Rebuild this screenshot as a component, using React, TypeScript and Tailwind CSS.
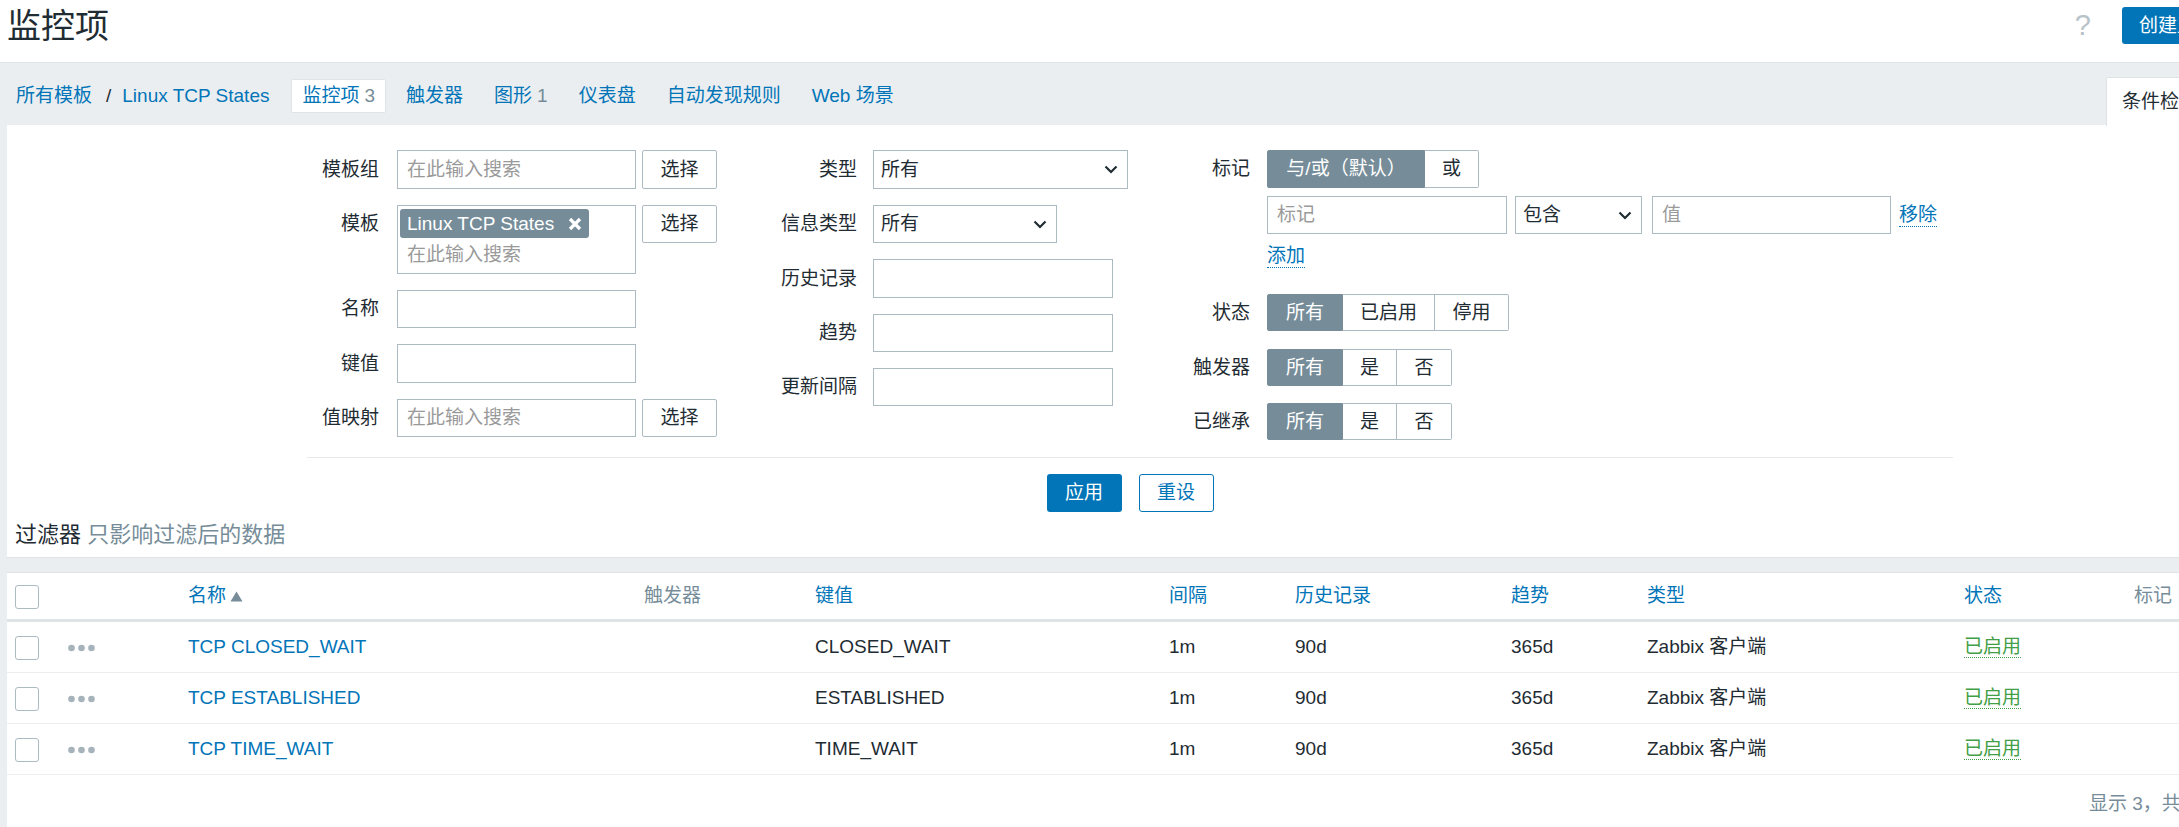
import React from "react";

function Chevron() {
  return (
    <svg width="14" height="9" viewBox="0 0 14 9" className="shrink-0">
      <polyline points="1.5,1.5 7,7 12.5,1.5" fill="none" stroke="#1f2c33" strokeWidth="2.2" />
    </svg>
  );
}

function Select({ w, text, h }: { w: string; text: string; h: string }) {
  return (
    <div className={`${w} ${h} flex items-center justify-between border border-[#acbbc2] bg-white pl-[7px] pr-[9px]`}>
      <span>{text}</span>
      <Chevron />
    </div>
  );
}

function Input({ w, h, ph }: { w: string; h: string; ph?: string }) {
  return (
    <div className={`${w} ${h} flex items-center border border-[#acbbc2] bg-white pl-[9px] text-[#9a9a9a]`}>
      {ph}
    </div>
  );
}

function PickBtn({ h }: { h: string }) {
  return (
    <div className={`${h} flex w-[75px] items-center justify-center rounded-[2px] border border-[#acbbc2] bg-white`}>
      选择
    </div>
  );
}

type SegItem = { t: string; w: string; on?: boolean };

function Seg({ items }: { items: SegItem[] }) {
  return (
    <div className="flex h-full">
      {items.map((it, i) => (
        <div
          key={i}
          className={`${it.w} flex items-center justify-center ${
            it.on
              ? "border border-[#768d99] bg-[#768d99] text-white"
              : "border-y border-r border-[#acbbc2] bg-white"
          } ${i === 0 ? "rounded-l-[2px]" : ""} ${i === items.length - 1 ? "rounded-r-[2px]" : ""}`}
        >
          {it.t}
        </div>
      ))}
    </div>
  );
}

function Label1({ t, h }: { t: string; h: string }) {
  return <div className={`${h} flex w-[72px] shrink-0 items-center justify-end`}>{t}</div>;
}
function Label2({ t, h }: { t: string; h: string }) {
  return <div className={`${h} flex w-[100px] shrink-0 items-center justify-end`}>{t}</div>;
}

function Dots() {
  return (
    <svg width="27" height="8" viewBox="0 0 27 8">
      <circle cx="3.5" cy="4" r="3.3" fill="#a6b3ba" />
      <circle cx="13.5" cy="4" r="3.3" fill="#a6b3ba" />
      <circle cx="23.5" cy="4" r="3.3" fill="#a6b3ba" />
    </svg>
  );
}

function Check() {
  return <div className="h-[24px] w-[24px] rounded-[3px] border border-[#acbbc2] bg-white" />;
}

const cols =
  "grid grid-cols-[53px_120px_456px_171px_354px_126px_216px_136px_317px_170px_1fr]";

const rows = [
  { name: "TCP CLOSED_WAIT", key: "CLOSED_WAIT" },
  { name: "TCP ESTABLISHED", key: "ESTABLISHED" },
  { name: "TCP TIME_WAIT", key: "TIME_WAIT" },
];

export default function App() {
  return (
    <div className="h-[827px] w-[2179px] overflow-hidden bg-[#ebeef0] font-['Liberation_Sans','Noto_Sans_CJK_SC',sans-serif] text-[19px] leading-[24px] text-[#1f2c33]">
      {/* Header */}
      <div className="flex h-[62px] items-start justify-between bg-white pl-[7px] pt-[7px]">
        <h1 className="text-[34px] font-normal leading-[38px]">监控项</h1>
        <div className="flex h-[37px] items-center">
          <span className="text-[29px] leading-[37px] text-[#b8c3c9]">?</span>
          <div className="ml-[31px] w-[57px] overflow-hidden">
            <div className="flex h-[37px] w-[129px] items-center rounded-[3px] bg-[#0275b8] pl-[17px] whitespace-nowrap text-white">
              创建监控项
            </div>
          </div>
        </div>
      </div>

      {/* Tabs band */}
      <div className="flex h-[63px] border-t border-[#dfe4e7] bg-[#ebeef0]">
        <div className="flex flex-1 items-start pl-[16px] pt-[16px]">
          <div className="flex h-[34px] items-center text-[#0275b8]">
            <span>所有模板</span>
            <span className="ml-[14px] mr-[11px] text-[#1f2c33]">/</span>
            <span>Linux TCP States</span>
          </div>
          <div className="ml-[22px] flex h-[34px] items-center gap-[9px]">
            <div className="flex h-[34px] items-center rounded-[2px] border border-[#dfe4e7] bg-white px-[10px] text-[#0275b8]">
              监控项<span className="ml-[5px] text-[#768d99]">3</span>
            </div>
            <div className="px-[11px] text-[#0275b8]">触发器</div>
            <div className="px-[11px] text-[#0275b8]">
              图形<span className="ml-[5px] text-[#768d99]">1</span>
            </div>
            <div className="px-[11px] text-[#0275b8]">仪表盘</div>
            <div className="px-[11px] text-[#0275b8]">自动发现规则</div>
            <div className="px-[11px] text-[#0275b8]">Web 场景</div>
          </div>
        </div>
        <div className="mt-[14px] flex h-[49px] w-[73px] shrink-0 items-center overflow-hidden rounded-tl-[2px] border-l border-t border-[#dfe4e7] bg-white pl-[15px] whitespace-nowrap">
          条件检索
        </div>
      </div>

      {/* Filter panel */}
      <div className="ml-[7px] border-b border-[#dfe4e7] bg-white pb-[10px] pt-[25px]">
        <div className="ml-[300px] w-[1646px]">
          <div className="flex items-start">
            {/* Column 1 */}
            <div className="flex w-[410px] flex-col gap-[16px]">
              <div className="flex items-start">
                <Label1 t="模板组" h="h-[39px]" />
                <div className="ml-[18px]">
                  <Input w="w-[239px]" h="h-[39px]" ph="在此输入搜索" />
                </div>
                <div className="ml-[6px]">
                  <PickBtn h="h-[39px]" />
                </div>
              </div>
              <div className="flex items-start">
                <Label1 t="模板" h="h-[38px]" />
                <div className="ml-[18px] flex h-[69px] w-[239px] flex-col border border-[#acbbc2] bg-white px-[2px] pt-[3px]">
                  <div className="flex h-[29px] w-[189px] items-center justify-between rounded-[3px] bg-[#768d99] pl-[7px] pr-[7px] text-white">
                    <span>Linux TCP States</span>
                    <svg width="14" height="14" viewBox="0 0 14 14">
                      <path d="M2 2 L12 12 M12 2 L2 12" stroke="white" strokeWidth="3.2" />
                    </svg>
                  </div>
                  <div className="mt-[5px] pl-[7px] text-[#9a9a9a]">在此输入搜索</div>
                </div>
                <div className="ml-[6px]">
                  <PickBtn h="h-[38px]" />
                </div>
              </div>
              <div className="flex items-start">
                <Label1 t="名称" h="h-[38px]" />
                <div className="ml-[18px]">
                  <Input w="w-[239px]" h="h-[38px]" />
                </div>
              </div>
              <div className="flex items-start">
                <Label1 t="键值" h="h-[39px]" />
                <div className="ml-[18px]">
                  <Input w="w-[239px]" h="h-[39px]" />
                </div>
              </div>
              <div className="flex items-start">
                <Label1 t="值映射" h="h-[38px]" />
                <div className="ml-[18px]">
                  <Input w="w-[239px]" h="h-[38px]" ph="在此输入搜索" />
                </div>
                <div className="ml-[6px]">
                  <PickBtn h="h-[38px]" />
                </div>
              </div>
            </div>

            {/* Column 2 */}
            <div className="ml-[40px] flex w-[371px] flex-col gap-[16px]">
              <div className="flex items-start">
                <Label2 t="类型" h="h-[39px]" />
                <div className="ml-[16px]">
                  <Select w="w-[255px]" h="h-[39px]" text="所有" />
                </div>
              </div>
              <div className="flex items-start">
                <Label2 t="信息类型" h="h-[38px]" />
                <div className="ml-[16px]">
                  <Select w="w-[184px]" h="h-[38px]" text="所有" />
                </div>
              </div>
              <div className="flex items-start">
                <Label2 t="历史记录" h="h-[39px]" />
                <div className="ml-[16px]">
                  <Input w="w-[240px]" h="h-[39px]" />
                </div>
              </div>
              <div className="flex items-start">
                <Label2 t="趋势" h="h-[38px]" />
                <div className="ml-[16px]">
                  <Input w="w-[240px]" h="h-[38px]" />
                </div>
              </div>
              <div className="flex items-start">
                <Label2 t="更新间隔" h="h-[38px]" />
                <div className="ml-[16px]">
                  <Input w="w-[240px]" h="h-[38px]" />
                </div>
              </div>
            </div>

            {/* Column 3 */}
            <div className="ml-[22px] flex flex-col">
              <div className="flex h-[38px] items-start">
                <Label2 t="标记" h="h-[38px]" />
                <div className="ml-[17px] h-[38px]">
                  <Seg
                    items={[
                      { t: "与/或（默认）", w: "w-[158px]", on: true },
                      { t: "或", w: "w-[54px]" },
                    ]}
                  />
                </div>
              </div>
              <div className="ml-[117px] mt-[8px] flex h-[38px] items-center">
                <Input w="w-[240px]" h="h-[38px]" ph="标记" />
                <div className="ml-[8px]">
                  <Select w="w-[127px]" h="h-[38px]" text="包含" />
                </div>
                <div className="ml-[10px]">
                  <Input w="w-[239px]" h="h-[38px]" ph="值" />
                </div>
                <span className="ml-[8px] border-b border-dotted border-[#0275b8] leading-[22px] text-[#0275b8]">
                  移除
                </span>
              </div>
              <div className="ml-[117px] mt-[10px] flex h-[24px] items-center">
                <span className="border-b border-dotted border-[#0275b8] leading-[22px] text-[#0275b8]">
                  添加
                </span>
              </div>
              <div className="mt-[26px] flex h-[37px] items-start">
                <Label2 t="状态" h="h-[37px]" />
                <div className="ml-[17px] h-[37px]">
                  <Seg
                    items={[
                      { t: "所有", w: "w-[76px]", on: true },
                      { t: "已启用", w: "w-[92px]" },
                      { t: "停用", w: "w-[74px]" },
                    ]}
                  />
                </div>
              </div>
              <div className="mt-[18px] flex h-[37px] items-start">
                <Label2 t="触发器" h="h-[37px]" />
                <div className="ml-[17px] h-[37px]">
                  <Seg
                    items={[
                      { t: "所有", w: "w-[76px]", on: true },
                      { t: "是", w: "w-[54px]" },
                      { t: "否", w: "w-[55px]" },
                    ]}
                  />
                </div>
              </div>
              <div className="mt-[17px] flex h-[37px] items-start">
                <Label2 t="已继承" h="h-[37px]" />
                <div className="ml-[17px] h-[37px]">
                  <Seg
                    items={[
                      { t: "所有", w: "w-[76px]", on: true },
                      { t: "是", w: "w-[54px]" },
                      { t: "否", w: "w-[55px]" },
                    ]}
                  />
                </div>
              </div>
            </div>
          </div>

          <div className="mt-[17px] h-px bg-[#e5e9ec]" />

          <div className="mt-[16px] flex justify-center gap-[17px]">
            <div className="flex h-[38px] w-[75px] items-center justify-center rounded-[3px] bg-[#0275b8] text-white">
              应用
            </div>
            <div className="flex h-[38px] w-[75px] items-center justify-center rounded-[3px] border border-[#0275b8] bg-white text-[#0275b8]">
              重设
            </div>
          </div>
        </div>

        <div className="mt-[11px] pl-[8px] text-[22px] leading-[24px]">
          过滤器 <span className="text-[#768d99]">只影响过滤后的数据</span>
        </div>
      </div>

      {/* Table panel */}
      <div className="ml-[7px] mt-[14px] h-[300px] border-t border-[#dfe4e7] bg-white">
        <div className={`${cols} h-[49px] items-center border-b-[3px] border-[#dfe4e7]`}>
          <div className="pl-[8px] pt-[1px]">
            <Check />
          </div>
          <div />
          <div className="flex items-center pl-[8px] text-[#0275b8]">
            名称
            <svg width="13" height="11" viewBox="0 0 13 11" className="ml-[4px]">
              <polygon points="6.5,0.5 12.5,10.5 0.5,10.5" fill="#768d99" />
            </svg>
          </div>
          <div className="pl-[8px] text-[#768d99]">触发器</div>
          <div className="pl-[8px] text-[#0275b8]">键值</div>
          <div className="pl-[8px] text-[#0275b8]">间隔</div>
          <div className="pl-[8px] text-[#0275b8]">历史记录</div>
          <div className="pl-[8px] text-[#0275b8]">趋势</div>
          <div className="pl-[8px] text-[#0275b8]">类型</div>
          <div className="pl-[8px] text-[#0275b8]">状态</div>
          <div className="pl-[8px] text-[#768d99]">标记</div>
        </div>
        {rows.map((r) => (
          <div key={r.name} className={`${cols} h-[51px] items-center border-b border-[#ebeef0]`}>
            <div className="pl-[8px] pt-[1px]">
              <Check />
            </div>
            <div className="flex items-center pl-[8px] pt-[2px]">
              <Dots />
            </div>
            <div className="pl-[8px] text-[#0275b8]">{r.name}</div>
            <div />
            <div className="pl-[8px]">{r.key}</div>
            <div className="pl-[8px]">1m</div>
            <div className="pl-[8px]">90d</div>
            <div className="pl-[8px]">365d</div>
            <div className="pl-[8px]">Zabbix 客户端</div>
            <div className="pl-[8px]">
              <span className="border-b border-dotted border-[#429e47] leading-[22px] text-[#429e47]">已启用</span>
            </div>
            <div />
          </div>
        ))}
        <div className="mt-[17px] whitespace-nowrap pl-[2082px] text-[#768d99]">显示 3，共找到 3</div>
      </div>
    </div>
  );
}
